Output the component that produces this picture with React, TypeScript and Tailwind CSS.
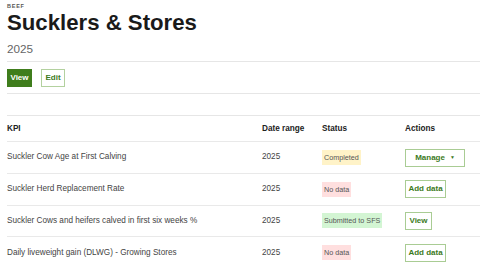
import { memo } from "react";

type Status = "Completed" | "No data" | "Submitted to SFS";

type Row = {
  kpi: string;
  date: string;
  status: Status;
  action: "manage" | "add" | "view";
};

const rows: Row[] = [
  { kpi: "Suckler Cow Age at First Calving", date: "2025", status: "Completed", action: "manage" },
  { kpi: "Suckler Herd Replacement Rate", date: "2025", status: "No data", action: "add" },
  { kpi: "Suckler Cows and heifers calved in first six weeks %", date: "2025", status: "Submitted to SFS", action: "view" },
  { kpi: "Daily liveweight gain (DLWG) - Growing Stores", date: "2025", status: "No data", action: "add" },
];

const badgeClass: Record<Status, string> = {
  Completed: "bg-[#fff3c8]",
  "No data": "bg-[#ffdfdf]",
  "Submitted to SFS": "bg-[#d3f5d3]",
};

const outlineBtn =
  "h-[18px] whitespace-nowrap border border-[#a9cc94] px-[3px] text-[8px] font-bold leading-none text-[#3c7a1c] bg-white flex items-center justify-center";

const Action = ({ type }: { type: Row["action"] }) => {
  if (type === "manage")
    return (
      <button className={`${outlineBtn} w-[60px] gap-[5px]`}>
        Manage
        <span className="text-[5px]">▼</span>
      </button>
    );
  if (type === "view") return <button className={`${outlineBtn} w-[27px]`}>View</button>;
  return <button className={`${outlineBtn} w-[41px]`}>Add data</button>;
};

const App = () => {
  return (
    <div className="min-h-[268px] w-[480px] overflow-hidden bg-white pl-[7px] font-['Liberation_Sans',Arial,sans-serif] text-[#222]">
      <div className="pt-[2px] text-[5.5px] font-bold tracking-[0.14em] text-[#555]">BEEF</div>
      <h1 className="-mt-[1px] text-[22.2px] font-bold leading-[28px] text-[#1a1a1a]">Sucklers &amp; Stores</h1>
      <div className="mt-[5px] text-[11.7px] leading-[14px] text-[#666]">2025</div>

      <div className="mt-[5px] border-t border-[#e6e6e6]" />
      <div className="flex h-[31px] items-center gap-[9px]">
        <button className="h-[18px] w-[25px] bg-[#3f7d1c] text-[8px] font-bold text-white">View</button>
        <button className="h-[18px] w-[24px] border border-[#b3d19f] text-[8px] font-bold text-[#3c7a1c]">Edit</button>
      </div>
      <div className="border-t border-[#e6e6e6]" />

      <div className="mt-[21px] text-[8.2px]">
        <div className="grid h-[26px] grid-cols-[255px_60px_83px_1fr] items-center border-t border-[#e6e6e6] font-bold text-[#222]">
          <div>KPI</div>
          <div>Date range</div>
          <div>Status</div>
          <div>Actions</div>
        </div>
        {rows.map((row, i) => (
          <div
            key={i}
            className="grid h-[31.7px] grid-cols-[255px_60px_83px_1fr] items-center border-t border-[#e9e9e9] text-[#444]"
          >
            <div>{row.kpi}</div>
            <div>{row.date}</div>
            <div>
              <span className={`inline-block px-[2px] py-[3px] text-[7.2px] leading-[9px] text-[#555] ${badgeClass[row.status]}`}>
                {row.status}
              </span>
            </div>
            <div>
              <Action type={row.action} />
            </div>
          </div>
        ))}
      </div>
    </div>
  );
};

export default memo(App);
